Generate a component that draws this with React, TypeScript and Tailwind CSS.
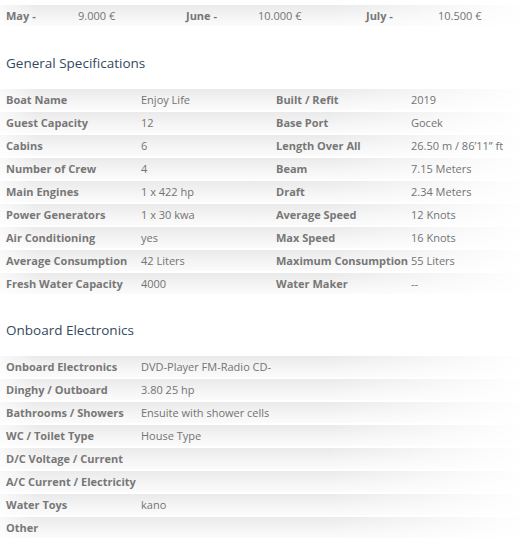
const prices = [
  ['May -', '9.000 €'],
  ['June -', '10.000 €'],
  ['July -', '10.500 €'],
]

const general = [
  ['Boat Name', 'Enjoy Life', 'Built / Refit', '2019'],
  ['Guest Capacity', '12', 'Base Port', 'Gocek'],
  ['Cabins', '6', 'Length Over All', '26.50 m / 86’11” ft'],
  ['Number of Crew', '4', 'Beam', '7.15 Meters'],
  ['Main Engines', '1 x 422 hp', 'Draft', '2.34 Meters'],
  ['Power Generators', '1 x 30 kwa', 'Average Speed', '12 Knots'],
  ['Air Conditioning', 'yes', 'Max Speed', '16 Knots'],
  ['Average Consumption', '42 Liters', 'Maximum Consumption', '55 Liters'],
  ['Fresh Water Capacity', '4000', 'Water Maker', '--'],
]

const electronics = [
  ['Onboard Electronics', 'DVD-Player FM-Radio CD-'],
  ['Dinghy / Outboard', '3.80 25 hp'],
  ['Bathrooms / Showers', 'Ensuite with shower cells'],
  ['WC / Toilet Type', 'House Type'],
  ['D/C Voltage / Current', ''],
  ['A/C Current / Electricity', ''],
  ['Water Toys', 'kano'],
  ['Other', ''],
]

const rowBg =
  'h-[23px] border-t-2 border-white overflow-hidden bg-[linear-gradient(to_right,rgba(255,255,255,0.7),rgba(255,255,255,0)_7%,rgba(255,255,255,0)_62%,#ffffff_100%),linear-gradient(to_bottom,#eaeaea,#f5f5f5_60%,#fbfbfb)]'

function Heading({ children, className = 'h-[61px] pt-[27px]' }: { children: string; className?: string }) {
  return (
    <h2 className={`${className} pl-1.5 text-[13.5px] leading-[20px] text-[#34495e]`}>
      {children}
    </h2>
  )
}

export default function App() {
  return (
    <main className="w-[527px] h-[541px] overflow-hidden bg-white pt-[3px] font-['Open_Sans',sans-serif] text-[11px] text-[#737373]">
      <div className={rowBg}>
        <div className="grid w-[540px] grid-cols-[72px_108px_72px_108px_72px_108px] leading-[21px]">
          {prices.map(([m, p]) => (
            <>
              <span key={m} className="pl-1.5 font-bold text-[#777777]">{m}</span>
              <span key={p} className="pl-1.5">{p}</span>
            </>
          ))}
        </div>
      </div>

      <Heading>General Specifications</Heading>
      {general.map((r) => (
        <div key={r[0]} className={rowBg}>
          <div className="grid w-[540px] grid-cols-[135px_135px_135px_135px] leading-[21px]">
            <span className="pl-1.5 font-bold whitespace-nowrap text-[#777777]">{r[0]}</span>
            <span className="pl-1.5 whitespace-nowrap">{r[1]}</span>
            <span className="pl-1.5 font-bold whitespace-nowrap text-[#777777]">{r[2]}</span>
            <span className="pl-1.5 whitespace-nowrap">{r[3]}</span>
          </div>
        </div>
      ))}

      <Heading className="h-[60px] pt-[26px]">Onboard Electronics</Heading>
      {electronics.map((r) => (
        <div key={r[0]} className={rowBg}>
          <div className="grid w-[540px] grid-cols-[135px_405px] leading-[21px]">
            <span className="pl-1.5 font-bold whitespace-nowrap text-[#777777]">{r[0]}</span>
            <span className="pl-1.5 whitespace-nowrap">{r[1]}</span>
          </div>
        </div>
      ))}
    </main>
  )
}
